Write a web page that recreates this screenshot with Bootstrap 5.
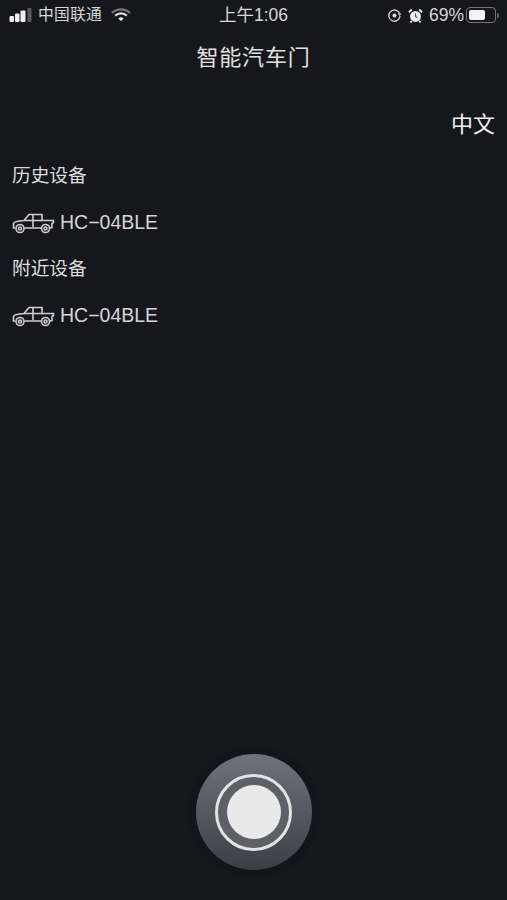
<!DOCTYPE html>
<html lang="zh">
<head>
<meta charset="utf-8">
<link href="https://cdn.jsdelivr.net/npm/bootstrap@5.3.0/dist/css/bootstrap.min.css" rel="stylesheet">
<style>
html,body{height:100%}
body{background:#16171d;color:#e6e6e6;font-family:"Liberation Sans","Noto Sans CJK SC",sans-serif;overflow:hidden}
.app-shell{height:900px;width:507px;padding-bottom:30px}
.status-bar{height:30px;padding:0 8px 0 9px;color:#d8d8d8;position:relative}
.status-clock{position:absolute;left:0;right:0;top:4px;text-align:center;font-size:17.5px;line-height:22px}
.carrier{margin:0 9px 0 6px;font-size:15.8px;letter-spacing:.2px}
.batt-pct{font-size:17.5px;margin:0 2px 0 6px}
.icon-gap{margin-right:6px}
.app-title{height:50px;padding-top:11px;font-size:22px;color:#e2e2e2;line-height:34px;letter-spacing:.8px}
.lang-row{height:58px;padding:29px 12px 0 0;font-size:22px;line-height:32px;color:#f0f0f0}
.section-label{font-size:18.7px;line-height:24px;padding-left:12px;color:#dcdcdc;height:24px}
.hist-label{margin-top:26px}
.device-row{padding-left:12px;height:69px;font-size:19.5px;color:#d6d6d6;gap:5px}
.shutter{width:116px;height:116px;border-radius:50%;background:linear-gradient(#70737c,#585b63 45%,#3c3e46);box-shadow:0 0 0 8px #13151d}
.shutter-ring{width:77px;height:77px;border-radius:50%;border:3px solid #e4e4e6;background:#5e6068}
.shutter-core{width:54px;height:54px;border-radius:50%;background:#e9e9ea}
.batt{width:30px;height:16px;border:1.5px solid #777;border-radius:4px;padding:2px}
.batt-fill{width:66%;height:100%;background:#f4f4f4;border-radius:2px}
.batt-tip{width:2px;height:5px;background:#666;border-radius:0 2px 2px 0;margin-left:1px}
</style>
</head>
<body>
<div class="app-shell d-flex flex-column">
  <div class="status-bar d-flex align-items-center">
    <svg width="23" height="14" viewBox="0 0 23 14" aria-hidden="true"><rect x="0.500" y="8" width="4.500" height="6" rx="1" fill="#f0f0f0"/><rect x="6" y="5.500" width="4.500" height="8.500" rx="1" fill="#f0f0f0"/><rect x="11.500" y="2.500" width="5" height="11.500" rx="1" fill="#f0f0f0"/><rect x="18.500" y="0" width="4" height="14" rx="1" fill="#5a5a5e"/></svg>
    <span class="carrier">中国联通</span>
    <svg width="20" height="14" viewBox="0 0 20 14" aria-hidden="true"><path d="M1 5a13 13 0 0 1 18 0" fill="none" stroke="#777" stroke-width="2.2"/><path d="M4.200 7.600a8.500 8.500 0 0 1 11.600 0" fill="none" stroke="#ddd" stroke-width="2.200"/><path d="M7.400 10.400a4 4 0 0 1 5.200 0L10 13z" fill="#eee"/></svg>
    <div class="status-clock">上午1:06</div>
    <div class="ms-auto d-flex align-items-center">
      <svg width="15" height="15" viewBox="0 0 15 15" class="icon-gap" aria-hidden="true"><path d="M12.600 5.500A5.600 5.600 0 1 0 13 8" fill="none" stroke="#ccc" stroke-width="1.400"/><path d="M10.600 5.600h4l-2 2.400z" fill="#ccc"/><circle cx="7.500" cy="7.500" r="2" fill="#ddd"/></svg>
      <svg width="15" height="15" viewBox="0 0 16 16" aria-hidden="true"><circle cx="8" cy="9" r="5.800" fill="#eee"/><path d="M8 5.500V9l2 1.200" fill="none" stroke="#555" stroke-width="1.200"/><path d="M1 4.500 4 1.600M15 4.500 12 1.600M4 14l-1.400 1.400M12 14l1.400 1.400" stroke="#eee" stroke-width="2"/></svg>
      <span class="batt-pct">69%</span>
      <div class="batt"><div class="batt-fill"></div></div><div class="batt-tip"></div>
    </div>
  </div>
  <div class="app-title text-center">智能汽车门</div>
  <div class="lang-row text-end">中文</div>
  <div class="section-label hist-label">历史设备</div>
  <div class="device-row d-flex align-items-center">
    <svg width="43" height="24" viewBox="0 0 43 24" aria-hidden="true"><g fill="none" stroke="#cfcfcf" stroke-width="1.600"><path d="M3 17H1.500V12.500C2 10.800 5 10 12 9.500L17 3.500H30V9.500H41.500V11.500L40 12.500V16.500L37.500 17"/><path d="M12 9.500H30M21 3.500V16M12.500 17H29"/><circle cx="8" cy="17.500" r="4"/><circle cx="33.500" cy="17.500" r="4"/><circle cx="8" cy="17.500" r="1.500"/><circle cx="33.500" cy="17.500" r="1.500"/></g></svg>
    <span>HC−04BLE</span>
  </div>
  <div class="section-label">附近设备</div>
  <div class="device-row d-flex align-items-center">
    <svg width="43" height="24" viewBox="0 0 43 24" aria-hidden="true"><g fill="none" stroke="#cfcfcf" stroke-width="1.600"><path d="M3 17H1.500V12.500C2 10.800 5 10 12 9.500L17 3.500H30V9.500H41.500V11.500L40 12.500V16.500L37.500 17"/><path d="M12 9.500H30M21 3.500V16M12.500 17H29"/><circle cx="8" cy="17.500" r="4"/><circle cx="33.500" cy="17.500" r="4"/><circle cx="8" cy="17.500" r="1.500"/><circle cx="33.500" cy="17.500" r="1.500"/></g></svg>
    <span>HC−04BLE</span>
  </div>
  <div class="mt-auto d-flex justify-content-center">
    <div class="shutter d-flex align-items-center justify-content-center">
      <div class="shutter-ring d-flex align-items-center justify-content-center"><div class="shutter-core"></div></div>
    </div>
  </div>
</div>
<script src="https://cdn.jsdelivr.net/npm/bootstrap@5.3.0/dist/js/bootstrap.bundle.min.js"></script>
</body>
</html>
